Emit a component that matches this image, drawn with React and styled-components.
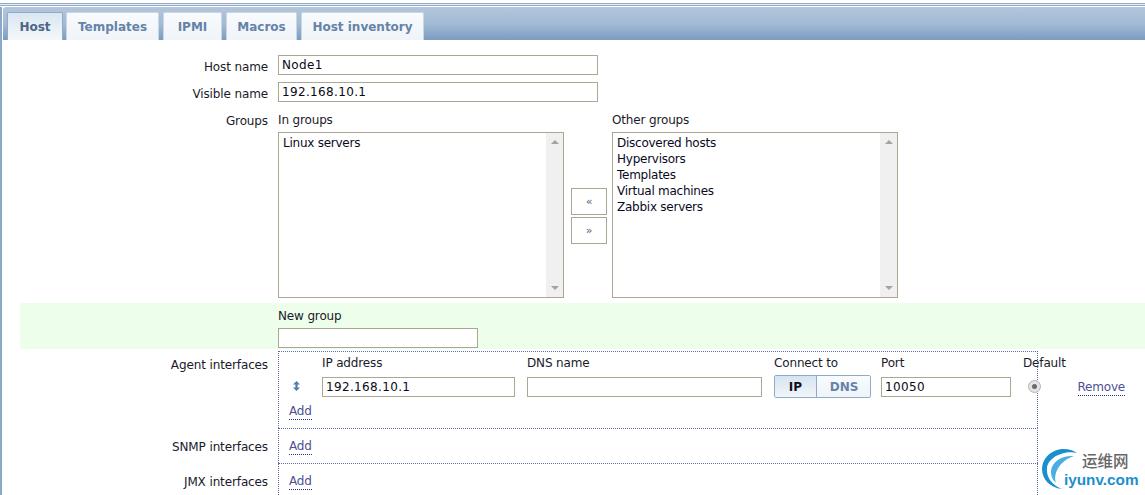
import React from 'react'
import styled, { createGlobalStyle } from 'styled-components'

const GlobalStyle = createGlobalStyle`
  html, body {
    margin: 0;
    padding: 0;
    background: #fff;
    overflow: hidden;
  }
  body {
    font-family: "DejaVu Sans", sans-serif;
    font-size: 12px;
    color: #0a0a1e;
  }
`

const Page = styled.div`
  position: relative;
  width: 1145px;
  height: 495px;
  overflow: hidden;
  box-sizing: border-box;
  padding-top: 3px;
  background: #fff;
`

const TopLine = styled.div`
  height: 3px;
  box-sizing: border-box;
  border-top: 1px solid #8ea9c8;
  border-bottom: 1px solid #8ea9c8;
  background: #e8eef5;
  margin-bottom: 1px;
`

const Frame = styled.div`
  border-left: 2px solid #8aa8c8;
  height: 488px;
`

const TabBar = styled.div`
  height: 33px;
  box-sizing: border-box;
  margin-left: 1px;
  padding: 5px 0 0 4px;
  display: flex;
  gap: 3px;
  border-top-left-radius: 3px;
  background: linear-gradient(#b3c6dc, #a4bbd5 50%, #7a9cc1);
`

const Tab = styled.div`
  box-sizing: border-box;
  width: ${p => p.$w}px;
  margin-right: ${p => p.$mr || 0}px;
  height: 28px;
  display: flex;
  align-items: center;
  justify-content: center;
  font-weight: bold;
  font-size: 12px;
  color: ${p => (p.$active ? '#4d6586' : '#6682a8')};
  border: 1px solid ${p => (p.$active ? '#8fabc9' : '#c9d8e7')};
  border-bottom: 0;
  border-radius: 2px 2px 0 0;
  background: ${p => (p.$active ? 'linear-gradient(#dae6f2, #f4f8fb)' : 'linear-gradient(#f9fbfd, #eff4f9)')};
`

const Form = styled.div`
  padding-top: 15px;
  display: flex;
  flex-direction: column;
`

const Row = styled.div`
  display: grid;
  grid-template-columns: 266px 1fr;
  column-gap: 10px;
  margin-bottom: ${p => p.$mb || 0}px;
`

const Label = styled.div`
  text-align: right;
  padding-top: ${p => p.$pt ?? 5}px;
  line-height: 14px;
  color: #1a1a2a;
  letter-spacing: -0.12px;
`

const TextInput = styled.div`
  box-sizing: border-box;
  width: ${p => p.$w}px;
  height: 20px;
  border: 1px solid #aaa794;
  background: #fff;
  padding-left: 3px;
  line-height: 19px;
  font-size: 12px;
  letter-spacing: 0.35px;
  color: #0a0a14;
`

const GroupsWrap = styled.div`
  display: flex;
  align-items: flex-start;
`

const GroupColumn = styled.div`
  display: flex;
  flex-direction: column;
`

const SmallLabel = styled.div`
  line-height: 14px;
  height: 14px;
  margin-bottom: 5px;
  letter-spacing: -0.15px;
  color: #1a1a2a;
`

const ListBox = styled.div`
  box-sizing: border-box;
  width: 286px;
  height: 166px;
  border: 1px solid #aaa794;
  display: flex;
  justify-content: space-between;
`

const ListItems = styled.div`
  padding: 2px 0 0 4px;
  line-height: 16px;
  letter-spacing: -0.25px;
`

const ScrollTrack = styled.div`
  width: 17px;
  background: #f0f0f0;
  display: flex;
  flex-direction: column;
  justify-content: space-between;
  align-items: center;
  padding: 7px 0;
`

const ArrowUp = styled.div`
  width: 0;
  height: 0;
  border-left: 4px solid transparent;
  border-right: 4px solid transparent;
  border-bottom: 4px solid #a3a3a3;
`

const ArrowDown = styled(ArrowUp)`
  border-bottom: 0;
  border-top: 4px solid #a3a3a3;
`

const MoveButtons = styled.div`
  width: 48px;
  padding: 75px 5px 0 0;
  box-sizing: border-box;
  display: flex;
  flex-direction: column;
  align-items: flex-end;
  gap: 2px;
`

const MoveButton = styled.div`
  box-sizing: border-box;
  width: 36px;
  height: 27px;
  border: 1px solid #aaa794;
  display: flex;
  align-items: center;
  justify-content: center;
  font-size: 11px;
  color: #50607a;
`

const GreenRow = styled(Row)`
  margin: 5px 0 2px 18px;
  grid-template-columns: 248px 1fr;
  background: #edffeb;
  height: 46px;
  box-sizing: border-box;
  padding-top: 6px;
`

const InterfaceSection = styled.div`
  width: 760px;
  border-left: 1px dotted #5b6ea8;
  border-right: 1px dotted #5b6ea8;
  border-top: 1px dotted #5b6ea8;
  height: ${p => p.$h}px;
  box-sizing: border-box;
  padding: ${p => p.$pt ?? 10}px 0 0 10px;
`

const IfaceGrid = styled.div`
  display: grid;
  grid-template-columns: 33px 205px 247px 107px 142px 54px 48px;
  margin-bottom: 6px;
  width: 836px;
  align-items: center;
`

const HeadCell = styled.div`
  line-height: 14px;
  height: 20px;
  letter-spacing: -0.15px;
  color: #1a1a2a;
`

const Mover = styled.div`
  display: flex;
  padding: 0 0 3px 4px;
  svg { display: block; }
`

const Toggle = styled.div`
  display: flex;
  width: 97px;
  height: 23px;
  box-sizing: border-box;
  border: 1px solid #8fabc9;
  border-radius: 2px;
  overflow: hidden;
  margin-top: -1px;
`

const ToggleOption = styled.div`
  flex: ${p => p.$w}px 0 0;
  display: flex;
  align-items: center;
  justify-content: center;
  font-weight: bold;
  font-size: 12px;
  color: ${p => (p.$on ? '#10101a' : '#6682a8')};
  background: ${p => (p.$on ? 'linear-gradient(#d6e3f0, #f2f6fa)' : 'linear-gradient(#f9fbfd, #eff4f9)')};
  border-right: ${p => (p.$on ? '1px solid #8fabc9' : '0')};
`

const Radio = styled.div`
  width: 11px;
  height: 11px;
  border-radius: 50%;
  background: #e4e4e4;
  border: 1px solid #b5b5b5;
  display: flex;
  align-items: center;
  justify-content: center;
  margin: 0 0 2px 5px;
  &::after {
    content: '';
    width: 5px;
    height: 5px;
    border-radius: 50%;
    background: #6b6b6b;
  }
`

const DottedLink = styled.span`
  display: inline-block;
  color: #4e4f94;
  line-height: 15px;
  border-bottom: 1px dotted #2b2b8c;
  letter-spacing: -0.2px;
`

const RemoveLink = styled(DottedLink)`
  justify-self: end;
  width: max-content;
  margin-top: 2px;
`

const Watermark = styled.div`
  position: absolute;
  left: 1041px;
  top: 447px;
  width: 104px;
  height: 48px;
`

const WatermarkText = styled.div`
  position: absolute;
  left: ${p => p.$x}px;
  top: ${p => p.$y}px;
  font-family: ${p => (p.$cjk ? '"Noto Sans CJK SC", sans-serif' : '"Liberation Sans", sans-serif')};
  font-size: ${p => p.$s}px;
  font-weight: ${p => (p.$cjk ? 500 : 700)};
  line-height: 1;
  color: ${p => p.$c};
  white-space: nowrap;
`

const tabs = [
  { name: 'Host', w: 56, active: true },
  { name: 'Templates', w: 93, mr: 1 },
  { name: 'IPMI', w: 59, mr: 1 },
  { name: 'Macros', w: 71, mr: 1 },
  { name: 'Host inventory', w: 123 },
]

const GroupList = ({ title, items }) => (
  <GroupColumn>
    <SmallLabel>{title}</SmallLabel>
    <ListBox>
      <ListItems>
        {items.map(i => <div key={i}>{i}</div>)}
      </ListItems>
      <ScrollTrack>
        <ArrowUp />
        <ArrowDown />
      </ScrollTrack>
    </ListBox>
  </GroupColumn>
)

const App = () => {
  return (
    <Page>
      <GlobalStyle />
      <TopLine />
      <Frame>
        <TabBar>
          {tabs.map(t => (
            <Tab key={t.name} $w={t.w} $mr={t.mr} $active={t.active}>{t.name}</Tab>
          ))}
        </TabBar>
        <Form>
          <Row $mb={7}>
            <Label>Host name</Label>
            <TextInput $w={320}>Node1</TextInput>
          </Row>
          <Row $mb={11}>
            <Label>Visible name</Label>
            <TextInput $w={320}>192.168.10.1</TextInput>
          </Row>
          <Row>
            <Label $pt={1}>Groups</Label>
            <GroupsWrap>
              <GroupList title="In groups" items={['Linux servers']} />
              <MoveButtons>
                <MoveButton>«</MoveButton>
                <MoveButton>»</MoveButton>
              </MoveButtons>
              <GroupList
                title="Other groups"
                items={['Discovered hosts', 'Hypervisors', 'Templates', 'Virtual machines', 'Zabbix servers']}
              />
            </GroupsWrap>
          </Row>
          <GreenRow>
            <div />
            <div>
              <SmallLabel>New group</SmallLabel>
              <TextInput $w={200} />
            </div>
          </GreenRow>
          <Row>
            <Label $pt={7}>Agent interfaces</Label>
            <InterfaceSection $h={77} $pt={4}>
              <IfaceGrid>
                <div />
                <HeadCell>IP address</HeadCell>
                <HeadCell>DNS name</HeadCell>
                <HeadCell>Connect to</HeadCell>
                <HeadCell>Port</HeadCell>
                <HeadCell>Default</HeadCell>
                <div />
                <Mover>
                  <svg width="7" height="10" viewBox="0 0 7 10">
                    <path d="M3.5 0 L7 3.5 H4.6 V6.5 H7 L3.5 10 L0 6.5 H2.4 V3.5 H0 Z" fill="#4f7fb0" />
                  </svg>
                </Mover>
                <TextInput $w={193}>192.168.10.1</TextInput>
                <TextInput $w={235} />
                <Toggle>
                  <ToggleOption $w={41} $on>IP</ToggleOption>
                  <ToggleOption $w={54}>DNS</ToggleOption>
                </Toggle>
                <TextInput $w={130}>10050</TextInput>
                <Radio />
                <RemoveLink>Remove</RemoveLink>
              </IfaceGrid>
              <DottedLink>Add</DottedLink>
            </InterfaceSection>
          </Row>
          <Row>
            <Label $pt={12}>SNMP interfaces</Label>
            <InterfaceSection $h={35}>
              <DottedLink>Add</DottedLink>
            </InterfaceSection>
          </Row>
          <Row>
            <Label $pt={12}>JMX interfaces</Label>
            <InterfaceSection $h={40}>
              <DottedLink>Add</DottedLink>
            </InterfaceSection>
          </Row>
        </Form>
      </Frame>
      <Watermark>
        <svg width="48" height="48" viewBox="0 0 48 48">
          <path d="M36 6 C24 -3 2 3 1 22 C1 32 9 41 21 42 C11 38 5 30 6 21 C7 11 22 3 36 6 Z" fill="#1a8fd0" />
          <path d="M33 9 C22 8 11 14 10 24 C10 30 12 33 15 36 C12 27 18 14 33 9 Z" fill="#4aaee2" />
        </svg>
        <WatermarkText $cjk $x={41} $y={6} $s={15.5} $c="#666">运维网</WatermarkText>
        <WatermarkText $x={23} $y={25} $s={15.3} $c="#1a8fd0">iyunv.com</WatermarkText>
      </Watermark>
    </Page>
  )
}

export default App
